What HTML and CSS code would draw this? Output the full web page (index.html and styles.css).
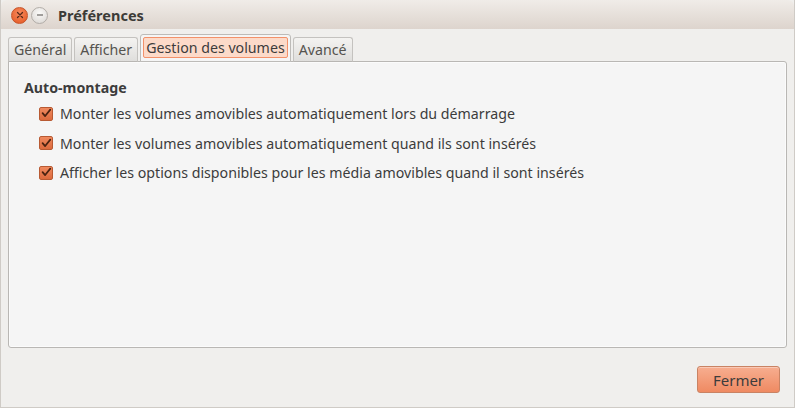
FILE: index.html
```html
<!DOCTYPE html>
<html lang="fr">
<head>
<meta charset="utf-8">
<title>Préférences</title>
<link rel="stylesheet" href="styles.css">
</head>
<body>
<div class="window">
  <div class="titlebar">
    <div class="controls">
      <span class="wbtn close">
        <svg width="10" height="10" viewBox="0 0 10 10"><path d="M2.5 2.5 L7.5 7.5 M7.5 2.5 L2.5 7.5" stroke="#5a2a18" stroke-width="1.3" stroke-linecap="round"/></svg>
      </span>
      <span class="wbtn min">
        <svg width="10" height="10" viewBox="0 0 10 10"><path d="M2 5 H8" stroke="#6a6763" stroke-width="1.2"/></svg>
      </span>
    </div>
    <div class="title">Préférences</div>
  </div>
  <div class="content">
    <div class="tabs">
      <div class="tab">Général</div>
      <div class="tab">Afficher</div>
      <div class="tab active"><span class="focus">Gestion des volumes</span></div>
      <div class="tab">Avancé</div>
    </div>
    <div class="panel">
      <div class="section">Auto-montage</div>
      <div class="row"><span class="check"><svg width="14" height="14" viewBox="0 0 14 14"><path d="M3 6.5 L6 10 L12 2.5" fill="none" stroke="#4a2210" stroke-width="2" stroke-linecap="round" stroke-linejoin="round"/></svg></span>Monter les volumes amovibles automatiquement lors du démarrage</div>
      <div class="row"><span class="check"><svg width="14" height="14" viewBox="0 0 14 14"><path d="M3 6.5 L6 10 L12 2.5" fill="none" stroke="#4a2210" stroke-width="2" stroke-linecap="round" stroke-linejoin="round"/></svg></span>Monter les volumes amovibles automatiquement quand ils sont insérés</div>
      <div class="row"><span class="check"><svg width="14" height="14" viewBox="0 0 14 14"><path d="M3 6.5 L6 10 L12 2.5" fill="none" stroke="#4a2210" stroke-width="2" stroke-linecap="round" stroke-linejoin="round"/></svg></span>Afficher les options disponibles pour les média amovibles quand il sont insérés</div>
    </div>
    <div class="actions">
      <button class="btn">Fermer</button>
    </div>
  </div>
</div>
</body>
</html>
```
FILE: styles.css
```css
html, body {
  margin: 0;
  padding: 0;
}
body {
  width: 795px;
  height: 408px;
  overflow: hidden;
  background: #f0efed;
  font-family: "Noto Sans", "DejaVu Sans", sans-serif;
  font-size: 14.2px;
  color: #3c3c3c;
}
.window {
  box-sizing: border-box;
  width: 795px;
  height: 408px;
  border-left: 1px solid #cfcbc6;
  border-right: 1px solid #cfcbc6;
  border-bottom: 1px solid #cfcbc6;
  display: flex;
  flex-direction: column;
}
.titlebar {
  height: 29px;
  flex: none;
  display: flex;
  align-items: center;
  background: linear-gradient(#f0ece8, #ddd4cd);
  border-top-right-radius: 6px;
  border-top-left-radius: 6px;
}
.controls {
  display: flex;
  gap: 3px;
  margin-left: 10px;
  margin-top: 1px;
}
.wbtn {
  width: 17px;
  height: 17px;
  border-radius: 50%;
  display: flex;
  align-items: center;
  justify-content: center;
  box-sizing: border-box;
}
.wbtn.close {
  background: radial-gradient(circle at 50% 35%, #f78a5e, #e3561f);
  border: 1px solid #c6542a;
}
.wbtn.min {
  background: radial-gradient(circle at 50% 35%, #fbfaf9, #d8d4d0);
  border: 1px solid #b2ada8;
}
.title {
  margin-left: 10px;
  font-weight: bold;
  font-size: 14.5px;
  color: #3c3b37;
  margin-top: 1px;
}
.content {
  flex: 1;
  display: flex;
  flex-direction: column;
  padding: 6px 7px 0 7px;
}
.tabs {
  display: flex;
  align-items: flex-end;
  gap: 2px;
  height: 27px;
  position: relative;
  z-index: 1;
  margin-bottom: -1px;
}
.tab {
  box-sizing: border-box;
  height: 25px;
  padding: 0 5px;
  display: flex;
  align-items: center;
  background: linear-gradient(#f4f3f1, #dfdedc);
  border: 1px solid #c4c2bf;
  border-bottom-color: #b8b6b3;
  border-radius: 3px 3px 0 0;
  color: #55534f;
}
.tab.active {
  height: 28px;
  padding: 0 2px;
  background: #f5f5f5;
  border-bottom-color: #f5f5f5;
  border-color: #bdbbb8;
  color: #3c3c3c;
}
.tab.active .focus {
  display: block;
  padding: 0 2px;
  line-height: 19px;
  background: #fcdac9;
  border: 1px solid #f3916a;
  border-radius: 2px;
  margin-bottom: 2px;
}
.panel {
  box-sizing: border-box;
  height: 287px;
  background: #f5f5f5;
  border: 1px solid #b9b7b4;
  border-radius: 0 3px 3px 3px;
  box-shadow: inset 0 0 0 1px #fbfbfb;
  padding: 15px 15px 0 15px;
}
.section {
  font-weight: bold;
  color: #3c3c3c;
  height: 22px;
  line-height: 22px;
}
.row {
  display: flex;
  align-items: center;
  height: 29.5px;
  padding-left: 15px;
  color: #3c3c3c;
}
.check {
  box-sizing: border-box;
  width: 14px;
  height: 14px;
  margin-right: 7px;
  border-radius: 2px;
  border: 1px solid #b85a33;
  background: linear-gradient(#f08a5f, #dc6a3d);
  display: flex;
  align-items: center;
  justify-content: center;
}
.check svg {
  width: 13px;
  height: 13px;
}
.actions {
  display: flex;
  justify-content: flex-end;
  padding-top: 18px;
  padding-right: 7px;
}
.btn {
  width: 83px;
  height: 27px;
  font-family: inherit;
  font-size: 15px;
  color: #3c3c3c;
  background: linear-gradient(#f7ae90, #ef8a62);
  border: 1px solid #c98364;
  border-radius: 3px;
  box-shadow: inset 0 1px 0 rgba(255,255,255,0.35);
}
```
